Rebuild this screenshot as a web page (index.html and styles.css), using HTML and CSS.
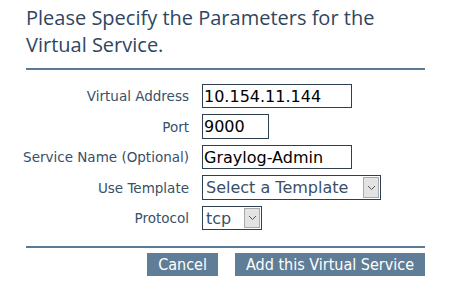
FILE: index.html
```html
<!DOCTYPE html>
<html lang="en">
<head>
  <meta charset="UTF-8">
  <title>Add Virtual Service</title>
  <link rel="stylesheet" href="styles.css">
</head>
<body>
  <div class="panel">
    <h1 class="heading">Please Specify the Parameters for the Virtual Service.</h1>

    <form class="vs-form">
      <label class="field-label" for="vip">Virtual Address</label>
      <input class="field-input wide" id="vip" type="text" value="10.154.11.144">

      <label class="field-label" for="port">Port</label>
      <input class="field-input short" id="port" type="text" value="9000">

      <label class="field-label" for="nickname">Service Name (Optional)</label>
      <input class="field-input wide" id="nickname" type="text" value="Graylog-Admin">

      <label class="field-label" for="template">Use Template</label>
      <div class="select-wrap template">
        <select class="field-select" id="template">
          <option>Select a Template</option>
        </select>
        <span class="select-arrow">
          <svg width="9" height="6" viewBox="0 0 9 6"><path d="M1 1 L4.5 4.5 L8 1" fill="none" stroke="#555" stroke-width="1"/></svg>
        </span>
      </div>

      <label class="field-label" for="protocol">Protocol</label>
      <div class="select-wrap protocol">
        <select class="field-select" id="protocol">
          <option>tcp</option>
          <option>udp</option>
        </select>
        <span class="select-arrow">
          <svg width="9" height="6" viewBox="0 0 9 6"><path d="M1 1 L4.5 4.5 L8 1" fill="none" stroke="#555" stroke-width="1"/></svg>
        </span>
      </div>
    </form>

    <div class="actions">
      <button class="btn" type="button">Cancel</button>
      <button class="btn" type="button">Add this Virtual Service</button>
    </div>
  </div>
</body>
</html>
```

FILE: styles.css
```css
* {
  margin: 0;
  padding: 0;
  box-sizing: border-box;
}

body {
  background: #fff;
  font-family: "DejaVu Sans", sans-serif;
  color: #2f4760;
}

.panel {
  width: 399px;
  margin-left: 26px;
  padding-top: 4px;
}

.heading {
  font-family: "Open Sans", sans-serif;
  font-weight: 400;
  font-size: 20px;
  line-height: 27px;
  color: #2f4660;
  padding-bottom: 10px;
  border-bottom: 2px solid #5a7a95;
}

.vs-form {
  display: grid;
  grid-template-columns: 163px auto;
  column-gap: 13px;
  row-gap: 6px;
  align-items: center;
  padding: 14px 0 16px;
  border-bottom: 2px solid #5a7a95;
}

.field-label {
  justify-self: end;
  white-space: nowrap;
  font-size: 13.5px;
  color: #38506a;
}

.field-input {
  height: 24px;
  border: 1px solid #2f3f52;
  padding: 0 1px;
  font-family: "DejaVu Sans", sans-serif;
  font-size: 16px;
  color: #000;
}

.field-input.wide {
  width: 150px;
}

.field-input.short {
  width: 67px;
  height: 25px;
}

.select-wrap {
  position: relative;
  height: 25px;
}

.select-wrap.template {
  width: 179px;
}

.select-wrap.protocol {
  width: 60px;
  height: 24px;
}

.field-select {
  appearance: none;
  width: 100%;
  height: 100%;
  border: 1px solid #2f3f52;
  background: #fff;
  padding: 0 3px;
  font-family: "DejaVu Sans", sans-serif;
  font-size: 16px;
  color: #3a5068;
}

.select-arrow {
  position: absolute;
  top: 2px;
  right: 2px;
  bottom: 2px;
  width: 16px;
  background: #e3e3e3;
  border: 1px solid #a9a9a9;
  display: flex;
  align-items: center;
  justify-content: center;
}

.actions {
  display: flex;
  justify-content: flex-end;
  gap: 17px;
  padding-top: 5px;
}

.btn {
  height: 23px;
  padding: 0 11px;
  border: none;
  background: #5f7d96;
  color: #fff;
  font-family: "DejaVu Sans Condensed", "DejaVu Sans", sans-serif;
  font-size: 16px;
}
```
